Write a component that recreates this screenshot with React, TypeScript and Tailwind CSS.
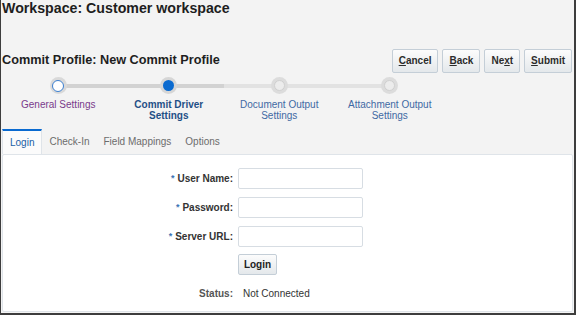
import React from "react";

const steps = [
  { label: ["General Settings"], state: "visited" },
  { label: ["Commit Driver", "Settings"], state: "current" },
  { label: ["Document Output", "Settings"], state: "todo" },
  { label: ["Attachment Output", "Settings"], state: "todo" },
];

const tabs = ["Login", "Check-In", "Field Mappings", "Options"];

function ToolButton({ pre, mark, post }: { pre: string; mark: string; post: string }) {
  return (
    <button className="h-[24px] px-[6px] rounded-[2px] border border-[#c4ced7] bg-gradient-to-b from-[#fcfcfc] to-[#e4e8eb] text-[10px] font-bold text-[#2c2c2c]">
      {pre}
      <span className="underline">{mark}</span>
      {post}
    </button>
  );
}

function StepDot({ state }: { state: string }) {
  if (state === "visited") {
    return (
      <div className="w-[17px] h-[17px] rounded-full bg-[#d9d9d9] flex items-center justify-center">
        <div className="w-[12px] h-[12px] rounded-full bg-white border-[1.5px] border-[#3b7fd0]" />
      </div>
    );
  }
  if (state === "current") {
    return (
      <div className="w-[17px] h-[17px] rounded-full bg-[#d6d6d6] flex items-center justify-center">
        <div className="w-[11px] h-[11px] rounded-full bg-[#0a6ad0]" />
      </div>
    );
  }
  return (
    <div className="w-[17px] h-[17px] rounded-full bg-[#dcdcdc] flex items-center justify-center">
      <div className="w-[11px] h-[11px] rounded-full bg-[#ececec] border border-[#d0d0d0]" />
    </div>
  );
}

function Stepper() {
  return (
    <div className="relative flex pl-[2px] mt-[4px]">
      {/* track between first and last dot */}
      <div className="absolute left-[57px] top-[7px] w-[220px] h-[4px] bg-[#d2d2d2]" />
      <div className="absolute left-[223px] top-[7px] w-[165px] h-[4px] bg-[#e2e2e2]" />
      {steps.map((s, i) => (
        <div key={i} className="relative w-[110.5px] flex flex-col items-center">
          <StepDot state={s.state} />
          <div
            className={`mt-[5px] text-[10px] leading-[11px] text-center ${
              s.state === "visited"
                ? "text-[#7a3b8c]"
                : s.state === "current"
                ? "text-[#1f4f86] font-bold"
                : "text-[#3f69a3]"
            }`}
          >
            {s.label.map((l) => (
              <div key={l}>{l}</div>
            ))}
          </div>
        </div>
      ))}
    </div>
  );
}

function Field({ label, star }: { label: string; star?: boolean }) {
  return (
    <>
      <div className="flex items-center justify-end text-[10px] font-bold text-[#333]">
        {star && <span className="text-[#3c74b6] text-[9px] self-start mt-[4px] mr-[3px]">*</span>}
        {label}
      </div>
      <input className="w-[125px] h-[21px] rounded-[2px] border border-[#d7dde3] bg-white outline-none" />
    </>
  );
}

export default function App() {
  return (
    <div
      className="w-[576px] h-[315px] bg-[#f3f3f3] border-l border-r-2 border-b-2 border-[#3d3d3d] flex flex-col overflow-hidden"
      style={{ fontFamily: '"Liberation Sans", Arial, sans-serif' }}
    >
      <h1 className="pl-[1px] text-[14.2px] leading-[16px] font-bold text-[#1e1e1e]">
        Workspace: Customer workspace
      </h1>

      <div className="mt-[32px] flex items-center justify-between pl-[1px] pr-[2px] h-[25px]">
        <h2 className="text-[12.7px] font-bold text-[#1e1e1e]">Commit Profile: New Commit Profile</h2>
        <div className="flex gap-[4px]">
          <ToolButton pre="" mark="C" post="ancel" />
          <ToolButton pre="" mark="B" post="ack" />
          <ToolButton pre="Ne" mark="x" post="t" />
          <ToolButton pre="" mark="S" post="ubmit" />
        </div>
      </div>

      <Stepper />

      <div className="mt-[8px] flex pl-[1px] h-[25px] text-[10px]">
        {tabs.map((t, i) =>
          i === 0 ? (
            <div
              key={t}
              className="px-[7px] flex items-center border-t-2 border-t-[#0a6ad0] border-x border-x-[#dfe4e9] bg-[#fbfbfb] text-[#1a5ea6]"
            >
              {t}
            </div>
          ) : (
            <div key={t} className="px-[7px] flex items-center text-[#6c6c6c]">
              {t}
            </div>
          )
        )}
      </div>

      <div className="flex-1 ml-[1px] mr-[1px] mb-[1px] bg-white border border-[#dfe4e9] rounded-[2px] pt-[13px]">
        <div className="grid grid-cols-[230px_auto] gap-x-[5px] gap-y-[8px] justify-start">
          <Field label="User Name:" star />
          <Field label="Password:" star />
          <Field label="Server URL:" star />
          <div />
          <button className="mt-[-1px] w-[39px] h-[21px] rounded-[2px] border border-[#c4ced7] bg-gradient-to-b from-[#fcfcfc] to-[#e4e8eb] text-[10px] font-bold text-[#222]">
            Login
          </button>
          <div className="mt-[3px] text-right text-[10px] font-bold text-[#555]">Status:</div>
          <div className="mt-[3px] pl-[5px] text-[10px] text-[#333]">Not Connected</div>
        </div>
      </div>
    </div>
  );
}
